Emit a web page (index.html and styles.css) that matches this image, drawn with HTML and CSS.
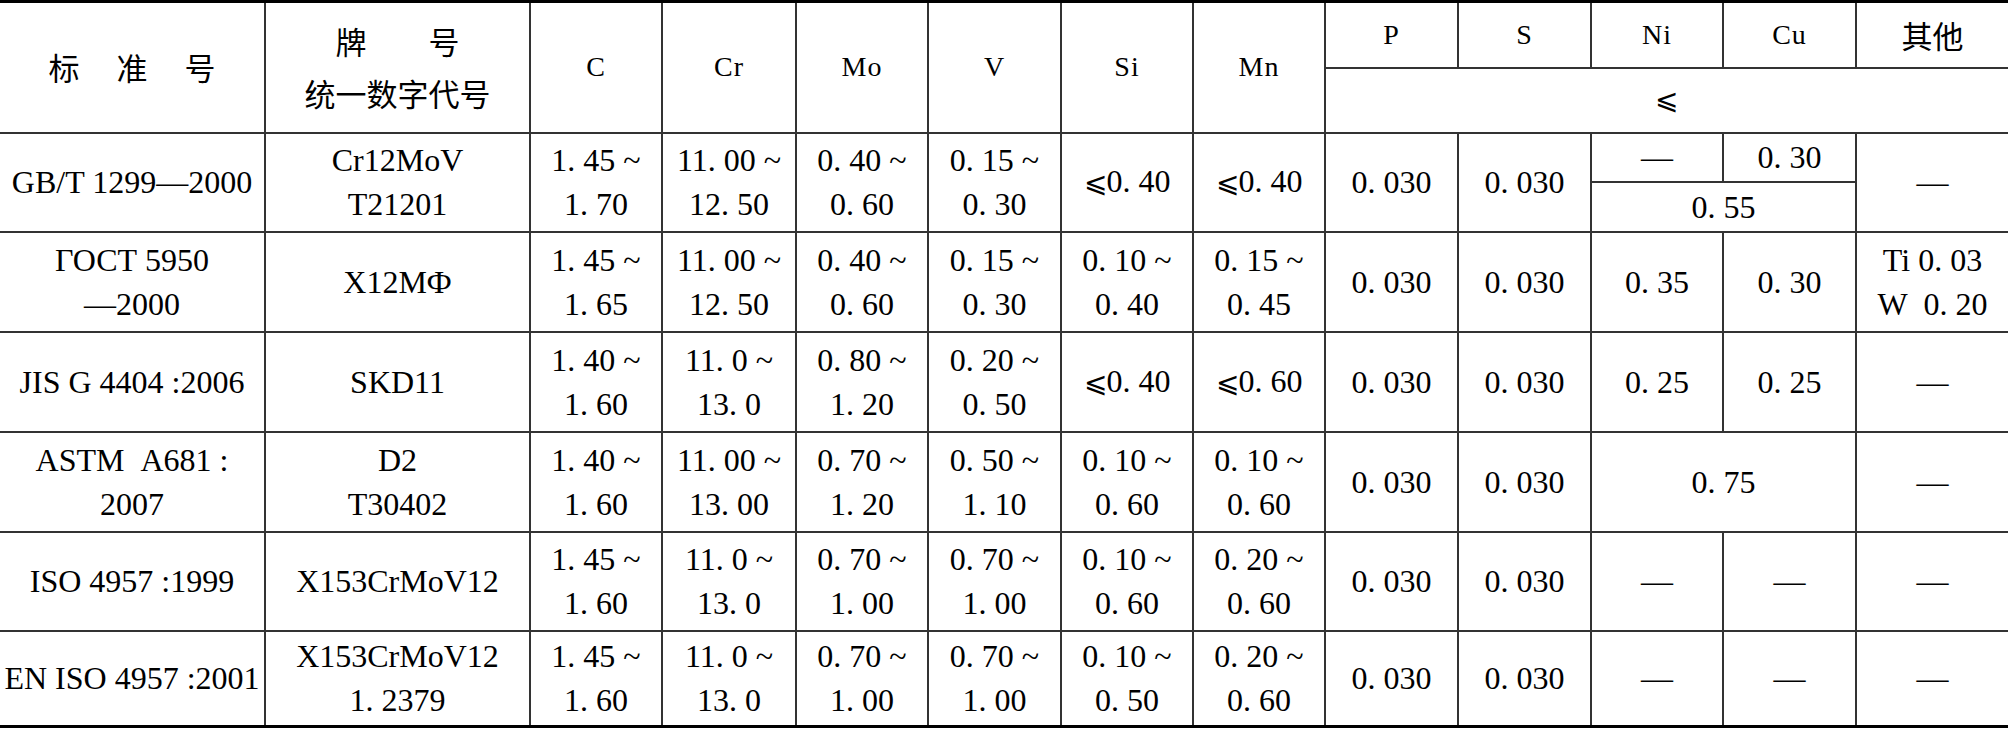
FILE: index.html
```html
<!DOCTYPE html>
<html lang="zh-CN">
<head>
    <meta charset="UTF-8">
    <title>Cr12MoV 钢号对照</title>
    <link rel="stylesheet" href="styles.css">
</head>
<body>

    <!-- 化学成分对照表 -->
    <table class="steel">
        <colgroup>
            <col class="w-std">
            <col class="w-grade">
            <col class="w-a"><col class="w-b"><col class="w-a"><col class="w-c">
            <col class="w-a"><col class="w-a"><col class="w-c"><col class="w-c">
            <col class="w-a"><col class="w-c">
            <col class="w-other">
        </colgroup>
        <thead>
            <tr class="head-top">
                <th rowspan="2" class="edge-l cjk wide">标　准　号</th>
                <th rowspan="2" class="cjk">牌　　号<br>统一数字代号</th>
                <th rowspan="2">C</th>
                <th rowspan="2">Cr</th>
                <th rowspan="2">Mo</th>
                <th rowspan="2">V</th>
                <th rowspan="2">Si</th>
                <th rowspan="2">Mn</th>
                <th>P</th>
                <th>S</th>
                <th>Ni</th>
                <th>Cu</th>
                <th class="edge-r cjk">其他</th>
            </tr>
            <tr class="head-bottom">
                <th colspan="5" class="edge-r"><span class="le">⩽</span></th>
            </tr>
        </thead>
        <tbody>
            <tr class="split-top">
                <td rowspan="2" class="edge-l">GB/T 1299—2000</td>
                <td rowspan="2">Cr12MoV<br>T21201</td>
                <td rowspan="2">1. 45 ~<br>1. 70</td>
                <td rowspan="2">11. 00 ~<br>12. 50</td>
                <td rowspan="2">0. 40 ~<br>0. 60</td>
                <td rowspan="2">0. 15 ~<br>0. 30</td>
                <td rowspan="2"><span class="le">⩽</span>0. 40</td>
                <td rowspan="2"><span class="le">⩽</span>0. 40</td>
                <td rowspan="2">0. 030</td>
                <td rowspan="2">0. 030</td>
                <td>—</td>
                <td>0. 30</td>
                <td rowspan="2" class="edge-r">—</td>
            </tr>
            <tr class="split-bottom">
                <td colspan="2">0. 55</td>
            </tr>
            <tr class="row-a">
                <td class="edge-l">ГОСТ 5950<br>—2000</td>
                <td>Х12МФ</td>
                <td>1. 45 ~<br>1. 65</td>
                <td>11. 00 ~<br>12. 50</td>
                <td>0. 40 ~<br>0. 60</td>
                <td>0. 15 ~<br>0. 30</td>
                <td>0. 10 ~<br>0. 40</td>
                <td>0. 15 ~<br>0. 45</td>
                <td>0. 030</td>
                <td>0. 030</td>
                <td>0. 35</td>
                <td>0. 30</td>
                <td class="edge-r">Ti 0. 03<br>W&nbsp;&nbsp;0. 20</td>
            </tr>
            <tr class="row-a">
                <td class="edge-l">JIS G 4404 :2006</td>
                <td>SKD11</td>
                <td>1. 40 ~<br>1. 60</td>
                <td>11. 0 ~<br>13. 0</td>
                <td>0. 80 ~<br>1. 20</td>
                <td>0. 20 ~<br>0. 50</td>
                <td><span class="le">⩽</span>0. 40</td>
                <td><span class="le">⩽</span>0. 60</td>
                <td>0. 030</td>
                <td>0. 030</td>
                <td>0. 25</td>
                <td>0. 25</td>
                <td class="edge-r">—</td>
            </tr>
            <tr class="row-a">
                <td class="edge-l">ASTM&nbsp;&nbsp;A681 :<br>2007</td>
                <td>D2<br>T30402</td>
                <td>1. 40 ~<br>1. 60</td>
                <td>11. 00 ~<br>13. 00</td>
                <td>0. 70 ~<br>1. 20</td>
                <td>0. 50 ~<br>1. 10</td>
                <td>0. 10 ~<br>0. 60</td>
                <td>0. 10 ~<br>0. 60</td>
                <td>0. 030</td>
                <td>0. 030</td>
                <td colspan="2">0. 75</td>
                <td class="edge-r">—</td>
            </tr>
            <tr class="row-b">
                <td class="edge-l">ISO 4957 :1999</td>
                <td>X153CrMoV12</td>
                <td>1. 45 ~<br>1. 60</td>
                <td>11. 0 ~<br>13. 0</td>
                <td>0. 70 ~<br>1. 00</td>
                <td>0. 70 ~<br>1. 00</td>
                <td>0. 10 ~<br>0. 60</td>
                <td>0. 20 ~<br>0. 60</td>
                <td>0. 030</td>
                <td>0. 030</td>
                <td>—</td>
                <td>—</td>
                <td class="edge-r">—</td>
            </tr>
            <tr class="row-c">
                <td class="edge-l">EN ISO 4957 :2001</td>
                <td>X153CrMoV12<br>1. 2379</td>
                <td>1. 45 ~<br>1. 60</td>
                <td>11. 0 ~<br>13. 0</td>
                <td>0. 70 ~<br>1. 00</td>
                <td>0. 70 ~<br>1. 00</td>
                <td>0. 10 ~<br>0. 50</td>
                <td>0. 20 ~<br>0. 60</td>
                <td>0. 030</td>
                <td>0. 030</td>
                <td>—</td>
                <td>—</td>
                <td class="edge-r">—</td>
            </tr>
        </tbody>
    </table>

</body>
</html>
```

FILE: styles.css
```css
* {
    margin: 0;
    padding: 0;
    box-sizing: border-box;
}
body {
    background-color: #fff;
    color: #000;
    font-family: "Liberation Serif", "Noto Sans CJK SC", serif;
}
.steel {
    width: 2008px;
    table-layout: fixed;
    border-collapse: collapse;
    border-top: 3px solid #000;
    border-bottom: 3px solid #000;
}
.w-std, .w-grade { width: 265px; }
.w-a { width: 132px; }
.w-b { width: 134px; }
.w-c { width: 133px; }
.w-other { width: 152px; }

.steel th,
.steel td {
    border: 2px solid #333;
    text-align: center;
    vertical-align: middle;
    font-weight: normal;
    font-size: 32px;
    line-height: 44px;
    white-space: nowrap;
}
.steel th {
    font-size: 28px;
    letter-spacing: 1px;
}
.steel th.cjk {
    font-family: "Noto Sans CJK SC", sans-serif;
    font-size: 31px;
    line-height: 52px;
    letter-spacing: 0;
}
.steel th.wide {
    letter-spacing: 3px;
    text-indent: 3px;
}
.steel .edge-l { border-left: none; }
.steel .edge-r { border-right: none; }

.le {
    font-family: "DejaVu Serif", serif;
    font-size: 28px;
}

.head-top { height: 66px; }
.head-bottom { height: 65px; }
.split-top { height: 49px; }
.split-bottom { height: 50px; }
.row-a { height: 100px; }
.row-b { height: 99px; }
.row-c { height: 96px; }
```
